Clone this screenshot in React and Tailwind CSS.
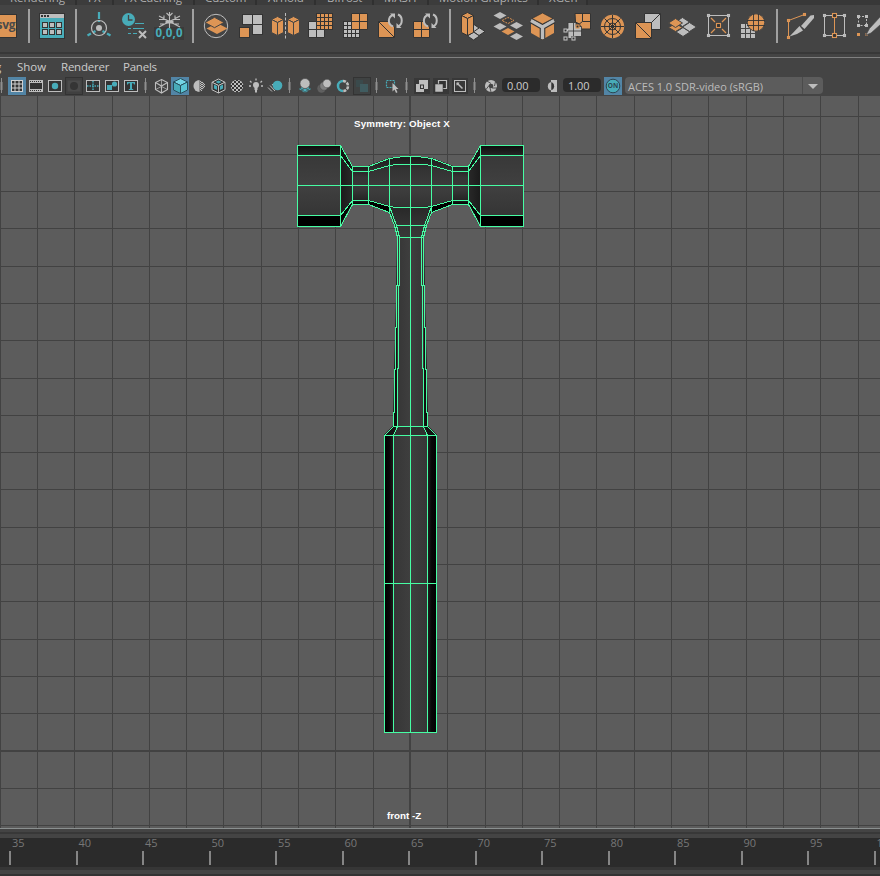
import React from 'react';

const O = '#dd9555';
const G = '#bdbdbd';
const T = '#48acb9';
const D = '#333333';
const B = '#444444';

/* ---------- drawing helpers ---------- */

// A toolbar cell: a slice of its bar, drawn in the bar's own coordinates.
function Cell({ x, w, y = 9, h = 34, children }) {
  return (
    <svg className="block shrink-0" width={w} height={h} viewBox={`${x} ${y} ${w} ${h}`}>
      {children}
    </svg>
  );
}

function Sq({ x, y, s = 7, f = G }) {
  return <rect x={x} y={y} width={s} height={s} fill={f} shapeRendering="crispEdges" />;
}

function Dia({ x, y, a = 6.5, b = 3.5, f = G, s = 'none' }) {
  return <path d={`M${x - a} ${y}L${x} ${y - b}L${x + a} ${y}L${x} ${y + b}Z`} fill={f} stroke={s} strokeWidth="1" />;
}

// Small hollow vertex marker
function Vx({ x, y, c = G, s = 3 }) {
  return <rect x={x - s / 2} y={y - s / 2} width={s} height={s} fill={D} stroke={c} strokeWidth="1.1" />;
}

function ShelfSep({ x, w }) {
  return (
    <Cell x={x - 4} w={w}>
      <rect x={x} y="9" width="2" height="35" fill="#a0a0a0" />
    </Cell>
  );
}

function Cycle({ x, y }) {
  return (
    <g fill="none" stroke={G} strokeWidth="2">
      <path d={`M${x - 2} ${y + 6}C${x - 8} ${y + 4} ${x - 7} ${y - 4} ${x - 2} ${y - 5.5}`} />
      <path d={`M${x + 3} ${y - 6}C${x + 8} ${y - 4} ${x + 8} ${y + 4} ${x + 3} ${y + 6}`} />
      <path d={`M${x - 5} ${y - 7}L${x} ${y - 7}L${x} ${y - 2}Z`} fill={G} stroke="none" />
      <path d={`M${x + 6.5} ${y + 7.5}L${x + 1.5} ${y + 7.5}L${x + 1.5} ${y + 2.5}Z`} fill={G} stroke="none" />
    </g>
  );
}

function Cube({ x, y, a, h, top, left, right, line }) {
  const b = a / 2;
  const t = y - h / 2;
  const m = y + h / 2;
  return (
    <g stroke={line} strokeWidth="1" strokeLinejoin="round">
      <path d={`M${x} ${t}L${x + a} ${t + b}L${x} ${t + 2 * b}L${x - a} ${t + b}Z`} fill={top} />
      <path d={`M${x - a} ${t + b}L${x} ${t + 2 * b}V${m}L${x - a} ${m - b}Z`} fill={left} />
      <path d={`M${x + a} ${t + b}L${x} ${t + 2 * b}V${m}L${x + a} ${m - b}Z`} fill={right} />
    </g>
  );
}

/* ---------- shelf ---------- */

const four = [0, 1, 2, 3];

function Shelf() {
  return (
    <div className="flex h-[47px] items-start overflow-hidden bg-[#444444] pt-1">
      <Cell x={0} w={24}>
        <rect x="-6" y="14.5" width="22.5" height="23" fill={O} stroke={D} />
        <text x="-3.5" y="28.5" fontFamily="Open Sans, sans-serif" fontSize="12" fontWeight="700" fill="#4a4a4a" textLength="19">svg</text>
      </Cell>
      <ShelfSep x={28} w={12} />
      <Cell x={36} w={35}>
        <rect x="39.5" y="13.5" width="25" height="25" fill={T} stroke={D} />
        <rect x="40" y="14" width="24" height="4" fill={G} />
        <path d="M41 16h2M44 16h2M47 16h2" stroke={D} strokeWidth="2" />
        {[0, 1, 2].map((i) => [0, 1].map((j) => (
          <rect key={`${i}${j}`} x={42.5 + i * 7} y={22.5 + j * 7} width="5" height="5" fill={G} stroke={D} />
        )))}
      </Cell>
      <ShelfSep x={75} w={12} />
      <Cell x={83} w={35}>
        <path d="M99 12v7M99 20v2M87.5 35.5l3.5-2M93 32.5l2.5-1.5M110.500 35.5l-3.500-2M105 32.500l-2.500-1.500" stroke={T} strokeWidth="2.200" />
        <circle cx="99" cy="28" r="7.500" fill="none" stroke={G} strokeWidth="1.200" />
        <circle cx="99" cy="28" r="3" fill={G} />
      </Cell>
      <Cell x={118} w={34}>
        <circle cx="128.500" cy="19.500" r="6.500" fill={T} />
        <path d="M128.500 15v5h4" fill="none" stroke={B} strokeWidth="1.300" />
        <path d="M135 23.500h9M128 28.500h3M133 28.500h11M128 33.500h3M133 33.500h4" stroke={T} />
        <path d="M139 31l7 7M146 31l-7 7" stroke={G} strokeWidth="2" />
      </Cell>
      <Cell x={152} w={36}>
        <rect x="154" y="27" width="30" height="13" fill="#3a3a3a" />
        <g stroke={G} strokeWidth="1.100" fill="none">
          <path d="M169.500 12v16M159 16l21 11M180 16l-21 11M166.500 13l3 3 3-3M159 19.500h5v-4M180 19.500h-5v-4M160 24h4M175 24h4" />
          <path d="M165.500 22h8" strokeWidth="3" />
        </g>
        <text x="155.500" y="37" fontFamily="Open Sans, sans-serif" fontSize="11.500" fontWeight="700" fill={T} textLength="27">0,0,0</text>
      </Cell>
      <ShelfSep x={192} w={12} />
      <Cell x={200} w={34}>
        <circle cx="216" cy="26" r="11.700" fill="none" stroke={G} strokeWidth="1" />
        <Dia x={217} y={28.500} a={10.500} b={5.500} f={O} />
        <Dia x={214.500} y={22.500} a={9.500} b={5.200} f={O} s={B} />
      </Cell>
      <Cell x={234} w={34}>
        <g stroke={D}>
          <rect x="242.500" y="14.500" width="10" height="10" fill={G} />
          <rect x="252.500" y="14.500" width="10" height="10" fill={G} />
          <rect x="252.500" y="24.500" width="10" height="10" fill={G} />
          <rect x="239.500" y="27.500" width="10" height="10" fill={O} />
        </g>
      </Cell>
      <Cell x={268} w={35}>
        <Cube x={277.500} y={26} a={6} h={19} top={O} left={O} right={O} line={B} />
        <Cube x={293.500} y={26} a={6} h={19} top={O} left={O} right={O} line={B} />
        <path d="M285.500 13v27" stroke={G} strokeDasharray="3 1.500" />
      </Cell>
      <Cell x={303} w={35}>
        <path d="M308.500 21.500h8v8h8v8h-16z" fill={G} stroke={D} />
        <path d="M308.500 29.500h8v8" fill="none" stroke={D} />
        <rect x="316" y="13" width="17" height="17" fill={D} />
        {four.map((i) => four.map((j) => <Sq key={`${i}${j}`} x={317 + i * 4} y={14 + j * 4} s={3} f={O} />))}
      </Cell>
      <Cell x={338} w={34}>
        <rect x="343" y="21" width="17" height="17" fill={D} />
        {four.map((i) => four.map((j) => <Sq key={`${i}${j}`} x={344 + i * 4} y={22 + j * 4} s={3} />))}
        <path d="M351.500 13.500h16v16h-16zM351.500 21.500h16M359.500 13.500v16" fill={O} stroke={D} />
      </Cell>
      <Cell x={372} w={34}>
        <path d="M378.500 21.500h16v16h-16zL394.500 37.500" fill={O} stroke={D} />
        <circle cx="395.500" cy="21" r="6" fill={B} />
        <Cycle x={395} y={20.500} />
      </Cell>
      <Cell x={406} w={39}>
        <path d="M413.500 21.500h16v16h-16zM413.500 29.500h16M421.500 21.500v16" fill={O} stroke={D} />
        <circle cx="430.500" cy="21" r="6" fill={B} />
        <Cycle x={430} y={20.500} />
      </Cell>
      <ShelfSep x={449} w={12} />
      <Cell x={457} w={34}>
        <Dia x={479} y={31.500} a={6} b={4} s={D} />
        <Dia x={473.500} y={36} a={6} b={4} s={D} />
        <Dia x={474} y={28} a={5} b={3.500} s={D} />
        <Cube x={467.500} y={24} a={6} h={23} top={O} left={O} right={O} line={D} />
      </Cell>
      <Cell x={491} w={35}>
        <Dia x={500} y={15.500} />
        <Dia x={500} y={26.500} />
        <Dia x={516.500} y={25.500} />
        <Dia x={508} y={31.500} f={O} />
        <Dia x={516.500} y={36.500} />
        <path d="M502 20.500L508 17.500L514 20.500L508 23.500Z" fill="#3a3a3a" stroke={O} strokeDasharray="2 1" />
      </Cell>
      <Cell x={526} w={34}>
        <path d="M542.500 13L554 19.500V33L542.500 39.500L531 33V19.500Z" fill={O} />
        <path d="M531 20.500L542.500 27L554 20.500M542.500 26V39" fill="none" stroke={D} strokeWidth="5.600" />
        <path d="M531 20.500L542.500 27L554 20.500M542.500 26V39" fill="none" stroke={G} strokeWidth="3.400" />
        <path d="M542.500 13L553 18.500L542.500 24L532 18.500Z" fill={O} stroke={D} strokeWidth=".8" />
      </Cell>
      <Cell x={560} w={34}>
        <path d="M575 13.500h15.500v15.500h-9l-2-5-4-2z" fill={O} stroke={D} />
        <path d="M582.500 13.500v8h8M582.500 21.500l-5 4" fill="none" stroke={D} />
        <path d="M568 22.500h8v4h5.500v10h-10v2h-3.500v-7h-2v-3h2z" fill={G} stroke={D} strokeWidth=".8" />
        <path d="M573.500 23v14M568 31h14" fill="none" stroke={D} strokeWidth=".8" />
        <Vx x={577.500} y={26.500} c={O} />
        <Vx x={565.500} y={30.500} />
        <Vx x={565.500} y={38.500} />
        <Vx x={573.500} y={38.500} />
      </Cell>
      <Cell x={594} w={35}>
        <circle cx="612.500" cy="26.500" r="11.700" fill={O} />
        <g fill="none" stroke={D} strokeWidth="1">
          <circle cx="612.500" cy="26.500" r="8" />
          <circle cx="612.500" cy="26.500" r="3.500" />
          <path d="M612.500 15v23M601 26.500h23M604.500 18.500l16 16M620.500 18.500l-16 16" />
        </g>
      </Cell>
      <Cell x={629} w={36}>
        <path d="M644.500 13.500h16v16h-16z" fill={G} stroke={D} />
        <path d="M660.500 13.500l-16 16" stroke={D} />
        <path d="M635.500 22.500h16v16h-16zL651.500 38.500" fill={O} stroke={D} />
      </Cell>
      <Cell x={665} w={37}>
        <Dia x={683} y={32} a={7} b={4.500} s={B} />
        <Dia x={689.500} y={27} a={7} b={4.500} s={B} />
        <Dia x={682.500} y={22} a={7} b={4.500} s={B} />
        <Dia x={675.500} y={27.500} a={7} b={4} f={O} s={B} />
        <Dia x={675.500} y={23} a={7} b={4.500} f={O} s={B} />
      </Cell>
      <Cell x={702} w={34}>
        <rect x="708.500" y="15.500" width="20" height="20" fill="none" stroke={G} />
        <path d="M711 18l4 4M726 18l-4 4M711 33l4-4M726 33l-4-4" stroke={O} strokeWidth="1.200" />
        <Vx x={708.500} y={15.500} s={2} /><Vx x={728.500} y={15.500} s={2} /><Vx x={708.500} y={35.500} s={2} /><Vx x={728.500} y={35.500} s={2} />
        <Vx x={718.500} y={25.500} c={O} s={4} />
      </Cell>
      <Cell x={736} w={36}>
        {[0, 1, 2].map((i) => [0, 1, 2].map((j) => <Sq key={`${i}${j}`} x={741 + i * 5} y={24 + j * 5} s={4} />))}
        <circle cx="756" cy="22.500" r="8.700" fill={O} stroke={B} />
        <path d="M747 20.500h18M747 25.500h18M753.500 14v17M758.500 14v17" stroke={D} strokeWidth=".9" />
      </Cell>
      <ShelfSep x={776} w={12} />
      <Cell x={784} w={34}>
        <path d="M788.500 37.500v-17l16-6" fill="none" stroke={O} />
        <Vx x={788.500} y={20.500} c={O} s={2} /><Vx x={804.500} y={14.500} c={O} s={2} /><Vx x={788.500} y={37.500} c={O} s={2} />
        <path d="M789.500 36.500L799.500 26l3.500 4.500L797 34Z" fill={G} />
        <path d="M801 26L810.500 15.500L814 15V18L804.500 29Z" fill={G} />
      </Cell>
      <Cell x={818} w={34}>
        <rect x="824.500" y="15.500" width="20" height="20" fill="none" stroke={G} />
        <path d="M834.500 15v20" stroke={O} />
        <Vx x={824.500} y={15.500} s={2} /><Vx x={844.500} y={15.500} s={2} /><Vx x={824.500} y={35.500} s={2} /><Vx x={844.500} y={35.500} s={2} />
        <Vx x={834.500} y={15.500} c={O} s={4} /><Vx x={834.500} y={35.500} c={O} s={4} />
      </Cell>
      <Cell x={852} w={28}>
        <rect x="858.500" y="16.500" width="8" height="9" fill="none" stroke={G} strokeDasharray="2 1.500" />
        <Sq x={857} y={15} s={3} /><Sq x={865} y={15} s={3} /><Sq x={857} y={24} s={3} /><Sq x={865} y={24} s={3} />
        <Sq x={857} y={33} s={3} f={O} /><Sq x={865} y={33} s={3} f="#8a6a50" />
        <path d="M866 35l3.500-6.500 11-12v8l-9.500 8.500z" fill={G} stroke={B} strokeWidth=".6" />
      </Cell>
    </div>
  );
}

/* ---------- panel toolbar ---------- */

function P({ x, w, children }) {
  return <Cell x={x} w={w} y={77} h={18}>{children}</Cell>;
}

function PSep({ x, x0, w }) {
  return (
    <P x={x0} w={w}>
      <path d={`M${x + 0.5} 78v15`} stroke="#8f8f8f" />
      <rect x={x - 0.5} y="82" width="2" height="8" fill="#8f8f8f" />
    </P>
  );
}

function Frame({ x }) {
  return <rect x={x + 0.5} y="80.500" width="13" height="11" fill={D} stroke={G} />;
}

function PanelBar() {
  return (
    <div className="flex h-[19px] items-start bg-[#444444] text-[12px]">
      <PSep x={1} x0={0} w={8} />
      <P x={8} w={18}>
        <rect x="8" y="77" width="18" height="18" fill="#5285a6" />
        <rect x="11.500" y="80.500" width="11" height="11" fill={D} stroke="#d0d0d0" />
        <path d="M15 81v10M19 81v10M12 84h10M12 88h10" stroke="#d0d0d0" />
      </P>
      <P x={26} w={20}>
        <rect x="29" y="80" width="14" height="12" fill={G} />
        <rect x="30" y="83" width="12" height="6" fill={D} />
        <path d="M30 81.500h12M30 90.500h12" stroke={D} strokeDasharray="1 1" />
      </P>
      <P x={46} w={19}><Frame x={48} /><circle cx="55" cy="86" r="3.200" fill={T} /></P>
      <P x={65} w={18}>
        <rect x="65.500" y="77.500" width="17" height="17" fill="#404040" stroke={D} />
        <rect x="67.500" y="80.500" width="13" height="11" fill="#4b4b4b" />
        <circle cx="74" cy="86" r="4" fill="#353535" />
      </P>
      <P x={83} w={20}>
        <Frame x={86} />
        <path d="M93 81v10" stroke={T} strokeWidth="1.500" strokeDasharray="1.500 1" /><path d="M87 86h12" stroke={T} strokeWidth="1.500" strokeDasharray="1.500 1" />
      </P>
      <P x={103} w={18}><Frame x={105} /><rect x="107" y="85" width="5" height="5" fill={T} /><circle cx="114.500" cy="84" r="2.600" fill={T} /></P>
      <P x={121} w={20}><Frame x={124} /><path d="M127 82h8v2.500h-1l-.5-1.200h-1.500v5.700h1.200v1h-4.400v-1h1.200v-5.700h-1.500l-.5 1.200h-1z" fill={T} /></P>
      <PSep x={145} x0={141} w={11} />
      <P x={152} w={19}>
        <g fill="none" stroke={G} strokeWidth="1.100"><path d="M161.500 79.500l6 3v7l-6 3.500-6-3.500v-7zM155.500 82.500l6 3.500 6-3.500M161.500 86v7" /><path d="M161.500 79.500v7l-6 3M161.500 86.500l6 3" strokeWidth=".7" /></g>
      </P>
      <P x={171} w={18}>
        <rect x="171" y="77" width="18" height="18" fill="#5285a6" />
        <Cube x={180.500} y={86} a={7} h={15} top="#74d4e4" left="#48acb9" right="#5ac5d4" line="#284f5c" />
      </P>
      <P x={189} w={20}>
        <circle cx="199" cy="86" r="5.800" fill="#555" />
        <path d="M199.500 80a6 6 0 0 0 0 12z" fill={G} />
        <path d="M200.500 81v10M202.500 82v8M204.500 84v4" stroke={G} strokeDasharray="1 1" />
        <path d="M201.500 82v9M203.500 83v6" stroke={G} strokeDasharray="1 1" />
      </P>
      <P x={209} w={20}>
        <Cube x={218.500} y={86} a={6.500} h={14} top={D} left={D} right={D} line={G} />
        <path d="M218.500 80.500l3 1.500-3 1.500-3-1.500zM214 84.500l3 1.500v4l-3-1.500zM223 84.500l-3 1.500v4l3-1.500z" fill={T} />
      </P>
      <P x={229} w={18}>
        <clipPath id="ball"><circle cx="237" cy="86" r="6.300" /></clipPath>
        <g clipPath="url(#ball)">
          <rect x="230" y="79" width="14" height="14" fill={D} />
          {[0, 1, 2, 3, 4, 5, 6].map((i) => [0, 1, 2, 3, 4, 5, 6].map((j) => ((i + j) % 2 ? null : <Sq key={`${i}${j}`} x={230 + i * 2} y={79 + j * 2} s={2} />)))}
        </g>
      </P>
      <P x={247} w={20}>
        <circle cx="256" cy="85" r="3" fill={G} /><path d="M254.500 87h3v3h-3zM255 90h2v2.500h-2z" fill={G} />
        <path d="M256 78.500v2M250 81l1.500 1.500M262 81l-1.500 1.500M249 86h2M261 86h2" stroke={G} strokeWidth="1.300" />
      </P>
      <P x={267} w={18}><path d="M268 87.500l4 4M270 85.500l5 5.500M272 84l5 6" stroke={G} /><circle cx="277.500" cy="85.500" r="4.800" fill={T} /></P>
      <PSep x={289} x0={285} w={11} />
      <P x={296} w={19}>
        <path d="M299 89l3-2h6l3 2-6 4z" fill={T} />
        <path d="M300 88l6 5M304 87l5 4M310 88l-6 5M306 87l-5 4" stroke={B} strokeWidth=".7" />
        <circle cx="305" cy="83.500" r="5" fill={G} stroke={B} strokeWidth=".6" />
      </P>
      <P x={315} w={19}>
        <circle cx="321.500" cy="88.500" r="4.200" fill="#606060" /><circle cx="324" cy="86" r="4.200" fill="#808080" stroke={B} strokeWidth=".5" /><circle cx="327" cy="83.500" r="4.200" fill={G} stroke={B} strokeWidth=".5" />
      </P>
      <P x={334} w={19}>
        <path d="M343 81a5 5 0 0 0 0 10" fill="none" stroke={T} strokeWidth="2.500" />
        <path d="M343 81a5 5 0 0 1 0 10" fill="none" stroke={G} strokeWidth="2.500" strokeDasharray="3 1" />
      </P>
      <P x={353} w={19}>
        <rect x="353.500" y="77.500" width="17" height="17" fill="#3f4242" stroke={D} />
        <rect x="356" y="80" width="7" height="7" fill="#3a4a4c" /><rect x="360" y="84" width="8" height="8" fill="#405c60" />
      </P>
      <PSep x={376} x0={372} w={11} />
      <P x={383} w={19}>
        <rect x="386.500" y="80.500" width="8" height="7" fill="none" stroke={T} strokeWidth="1.200" strokeDasharray="2 1" />
        <path d="M392.500 83v8.500l2-2 1.500 3.500 1.500-.8-1.500-3.200h2.500z" fill={G} />
      </P>
      <PSep x={406} x0={402} w={11} />
      <P x={413} w={19}>
        <rect x="414" y="78" width="16" height="16" fill="#383838" />
        <rect x="419" y="80" width="9" height="9" fill={G} /><rect x="416" y="84" width="8" height="8" fill={G} />
        <path d="M420 89v-4.500h4v4.500z" fill={D} /><rect x="421" y="85.500" width="2" height="2.500" fill={G} />
      </P>
      <P x={432} w={19}>
        <rect x="433" y="78" width="16" height="16" fill="#383838" />
        <path d="M438.500 80.500h8v8h-8z" fill={D} stroke={G} strokeWidth="1.200" /><rect x="435" y="84" width="8" height="8" fill={G} stroke={D} strokeWidth=".5" />
      </P>
      <P x={451} w={19}>
        <rect x="452" y="78" width="16" height="16" fill="#383838" />
        <rect x="454.500" y="80.500" width="11" height="11" fill="none" stroke={G} /><path d="M457 83l5.500 5.500" stroke={G} strokeWidth="1.500" /><path d="M456.500 82.500h3l-1.500 2.500-1.500.5z" fill={G} />
      </P>
      <PSep x={474} x0={470} w={12} />
      <P x={482} w={20}>
        <circle cx="491" cy="86" r="4.200" fill="none" stroke={G} strokeWidth="3.700" />
        <path d="M487 81l4 2.500M495.500 81.500l-1 4.500M497 88h-5M491 92l-1-4M486 89.500l3-4" stroke={D} strokeWidth=".8" />
      </P>
      <div className="mt-px h-[14px] w-[38px] rounded-sm bg-[#2b2b2b] pl-[5px] font-['Open_Sans',sans-serif] text-[11px] leading-[15px] tracking-[-0.1px] text-[#cccccc]">0.00</div>
      <P x={540} w={23}>
        <path d="M551.500 82a4.300 4.300 0 0 0 0 8.500z" fill={G} />
        <path d="M551 80h6v12h-6v-1.800a4.500 4.500 0 0 0 0-8.400z" fill={G} />
        <path d="M551.500 82.500a4 4 0 0 1 0 7.500z" fill={D} />
      </P>
      <div className="mt-px h-[14px] w-[38px] rounded-sm bg-[#2b2b2b] pl-[5px] font-['Open_Sans',sans-serif] text-[11px] leading-[15px] tracking-[-0.1px] text-[#cccccc]">1.00</div>
      <P x={601} w={24}>
        <rect x="604" y="77" width="18" height="18" fill="#5285a6" />
        <circle cx="613" cy="86" r="6.800" fill={T} stroke="#2c4652" />
        <text x="613" y="88.300" textAnchor="middle" fontFamily="Open Sans, sans-serif" fontWeight="700" fontSize="6.500" fill="#2c4652">ON</text>
      </P>
      <div className="flex h-[17px] w-[198px] rounded-sm bg-[#5c5c5c] font-['Open_Sans',sans-serif] text-[11px] leading-[19px] text-[#bbbbbb]">
        <span className="w-[178px] whitespace-nowrap border-r border-[#4b4b4b] pl-[3px] tracking-[-0.03px]">ACES 1.0 SDR-video (sRGB)</span>
        <span className="flex flex-1 items-center justify-center pt-px">
          <svg width="10" height="5" viewBox="0 0 10 5"><path d="M0 0h10L5 5z" fill={G} /></svg>
        </span>
      </div>
    </div>
  );
}

/* ---------- viewport ---------- */

const gridX = [0, 37, 74, 112, 149, 186, 223, 261, 298, 335, 373, 447, 485, 522, 559, 596, 634, 671, 708, 746, 783, 820, 858];
const gridY = [116, 154, 191, 228, 266, 303, 340, 378, 415, 452, 489, 527, 564, 601, 639, 676, 713, 788, 825];

// Left half of the wireframe; the right half is its mirror about the handle axis.
function HalfShade() {
  return (
    <g>
      <path d="M297 145h43v81h-43z" fill="url(#head)" />
      <path d="M340 155L352 171V200L340 215Z" fill="url(#flank)" />
      <path d="M340 145L352 166V171L340 155Z" fill="#141414" />
      <path d="M340 215L352 200V204L340 226Z" fill="#050505" />
      <path d="M352 166h16v38h-16z" fill="url(#neck)" />
      <path d="M368 166L389 158L411 156V207H389V212L368 204Z" fill="url(#bulge)" />
      <path d="M368 166L389 158L411 156V164L389 165L368 171Z" fill="url(#brow)" />
      <path d="M368 200L389 206V212L368 204Z" fill="#000" />
      <path d="M389 206L411 207V237H398L394 225L389 212Z" fill="url(#throat)" />
      <path d="M397 237H411V426H393L394 378L396 300Z" fill="url(#shaft)" />
      <path d="M393 426H411V435H384Z" fill="#303030" />
      <path d="M393 426H397L393 435H384Z" fill="#141414" />
      <path d="M384 435H411V732H384Z" fill="url(#grip)" />
    </g>
  );
}

function HalfWire() {
  return (
    <g fill="none" stroke="#46fda3" strokeWidth="1" shapeRendering="crispEdges">
      <path d="M340.500 145.500H297.500V226.500H340.500ZM297.500 155.500H340.500M297.500 215.500H340.500M297.500 185.500H410.500" />
      <path d="M340.500 145.500L352.500 166.500H368.500L389.500 158.500L403.500 156.500H410.500" />
      <path d="M340.500 155.500L352.500 171.500H368.500L389.500 165.500L396.500 164.500H410.500" />
      <path d="M340.500 215.500L352.500 200.500H368.500L389.500 206.500L396.500 207.500H410.500" />
      <path d="M340.500 226.500L352.500 204.500H368.500L389.500 212.500L394.500 225.500L397.500 237.500V285.500H396.500V327.500H395.500V369.500H394.500V412.500H393.500V426.500L384.500 435.500" />
      <path d="M352.500 166.500V204.500M368.500 166.500V204.500M389.500 158.500V212.500M410.500 156.500V732.500" />
      <path d="M389.500 206.500L396.500 225.500L399.500 237.500V285.500H398.500V368.500H397.500V426.500L393.500 435.500" />
      <path d="M395.500 225.500H410.500M398.500 237.500H410.500M393.500 426.500H410.500" />
      <path d="M410.500 435.500H384.500V732.500H410.500M393.500 435.500V732.500M384.500 583.500H410.500" />
    </g>
  );
}

function Grad({ id, stops, horizontal }) {
  return (
    <linearGradient id={id} x1="0" y1="0" x2={horizontal ? 1 : 0} y2={horizontal ? 0 : 1}>
      {stops.map(([o, c]) => <stop key={o} offset={o} stopColor={c} />)}
    </linearGradient>
  );
}

function Viewport() {
  return (
    <div className="relative h-[732px] bg-[#5c5c5c]">
      <svg className="block" width="880" height="732" viewBox="0 96 880 732">
        <defs>
          <Grad id="head" stops={[[0, '#0d0d0d'], [0.12, '#242424'], [0.121, '#383838'], [0.5, '#404040'], [0.87, '#353535'], [0.871, '#000000'], [1, '#000000']]} />
          <Grad id="flank" horizontal stops={[[0, '#1a1a1a'], [1, '#282828']]} />
          <Grad id="neck" stops={[[0, '#1c1c1c'], [0.3, '#353535'], [0.6, '#383838'], [0.9, '#242424'], [1, '#000000']]} />
          <Grad id="bulge" stops={[[0, '#1c1c1c'], [0.25, '#333333'], [0.6, '#3d3d3d'], [1, '#303030']]} />
          <Grad id="brow" stops={[[0, '#181818'], [1, '#303030']]} />
          <Grad id="throat" stops={[[0, '#282828'], [0.6, '#333333'], [1, '#383838']]} />
          <Grad id="shaft" horizontal stops={[[0, '#080808'], [0.2, '#111111'], [0.23, '#363636'], [1, '#3f3f3f']]} />
          <Grad id="grip" horizontal stops={[[0, '#000000'], [0.2, '#080808'], [0.34, '#1f1f1f'], [0.35, '#363636'], [1, '#3f3f3f']]} />
        </defs>
        <g fill="#424242" shapeRendering="crispEdges">
          {gridX.map((x) => <rect key={x} x={x} y="96" width="1" height="732" />)}
          {gridY.map((y) => <rect key={y} x="0" y={y} width="880" height="1" />)}
          <rect x="409" y="96" width="2" height="732" />
          <rect x="0" y="750" width="880" height="2" />
        </g>
        <HalfShade />
        <g transform="translate(821 0) scale(-1 1)"><HalfShade /></g>
        <HalfWire />
        <g transform="translate(821 0) scale(-1 1)"><HalfWire /></g>
      </svg>
      <span className="absolute left-[354px] top-[22px] whitespace-nowrap font-['Liberation_Sans',sans-serif] text-[9.8px] font-bold leading-[12px] tracking-[0.16px] text-white">Symmetry: Object X</span>
      <span className="absolute left-[387px] top-[714px] whitespace-nowrap font-['Liberation_Sans',sans-serif] text-[9.8px] font-bold leading-[12px] text-white">front -Z</span>
    </div>
  );
}

/* ---------- page ---------- */

function Tab({ className, children }) {
  return (
    <div className={`h-[5px] shrink-0 overflow-hidden whitespace-nowrap border-r-2 border-[#303030] bg-[#3c3c3c] font-['Open_Sans',sans-serif] text-[11.5px] leading-[16px] text-[#b0b0b0] ${className}`}>
      <span className="-mt-[10px] block">{children}</span>
    </div>
  );
}

const frames = [35, 40, 45, 50, 55, 60, 65, 70, 75, 80, 85, 90, 95, 100];

export default function App() {
  return (
    <div className="flex h-[876px] w-[880px] flex-col overflow-hidden bg-[#444444]">
      <div className="flex h-[5px] bg-[#383838]">
        <Tab className="w-[77px] pl-[10px]">Rendering</Tab>
        <Tab className="w-[37px] pl-[11px]">FX</Tab>
        <Tab className="w-[81px] pl-[10px]">FX Caching</Tab>
        <Tab className="w-[62px] pl-[10px]">Custom</Tab>
        <Tab className="w-[59px] pl-[11px]">Arnold</Tab>
        <Tab className="w-[58px] pl-[11px]">Bifrost</Tab>
        <Tab className="w-[55px] pl-[10px]">MASH</Tab>
        <Tab className="w-[110px] pl-[10px]">Motion Graphics</Tab>
        <Tab className="w-[49px] pl-[10px]">XGen</Tab>
      </div>
      <Shelf />
      <div className="h-[2px] bg-[#383838]" />
      <div className="h-[3px]" />
      <div className="h-px bg-[#808080]" />
      <div className="flex h-[19px] items-start overflow-hidden font-['Open_Sans',sans-serif] text-[11.5px] leading-[17px] tracking-[-0.22px] text-[#cccccc]">
        <span className="w-[17px] shrink-0"><span className="-ml-[5px]">g</span></span>
        <span className="w-[44px] shrink-0 tracking-normal">Show</span>
        <span className="w-[62px] shrink-0">Renderer</span>
        <span>Panels</span>
      </div>
      <PanelBar />
      <Viewport />
      <div className="h-px shrink-0 bg-[#8a8f8f]" />
      <div className="h-[3px] shrink-0" />
      <div className="h-[2px] shrink-0 bg-[#383838]" />
      <div className="h-[4px] shrink-0" />
      <div className="flex h-[29px] shrink-0 overflow-hidden bg-[#2b2b2b] pl-[9px] font-['Open_Sans',sans-serif] text-[11px] text-[#777777]">
        {frames.map((f) => (
          <div key={f} className="flex w-[66.500px] shrink-0 flex-col">
            <span className="h-[13px] pl-[3px] leading-[10px]">{f}</span>
            <span className="h-[14px] w-[2px] bg-[#858585]" />
          </div>
        ))}
      </div>
      <div className="h-[3px] shrink-0 bg-[#363636]" />
      <div className="h-[4px] shrink-0" />
      <div className="h-[2px] shrink-0 bg-[#333333]" />
    </div>
  );
}
